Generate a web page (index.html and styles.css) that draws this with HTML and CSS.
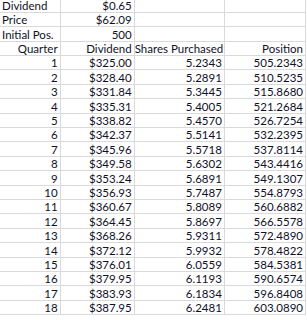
FILE: index.html
```
<!DOCTYPE html>
<html lang="en">
  <head>
    <meta charset="UTF-8" />
    <title>Dividend Reinvestment</title>
    <link rel="stylesheet" href="styles.css">
  </head>
  <body>
    <table class="sheet">
      <colgroup>
        <col class="col-a" />
        <col class="col-b" />
        <col class="col-c" />
        <col class="col-d" />
      </colgroup>
      <tbody>
        <tr><td class="label">Dividend</td><td>$0.65</td><td></td><td></td></tr>
        <tr><td class="label">Price</td><td>$62.09</td><td></td><td></td></tr>
        <tr><td class="label">Initial Pos.</td><td>500</td><td></td><td></td></tr>
        <tr><td>Quarter</td><td>Dividend</td><td>Shares Purchased</td><td>Position</td></tr>
        <tr><td>1</td><td>$325.00</td><td>5.2343</td><td>505.2343</td></tr>
        <tr><td>2</td><td>$328.40</td><td>5.2891</td><td>510.5235</td></tr>
        <tr><td>3</td><td>$331.84</td><td>5.3445</td><td>515.8680</td></tr>
        <tr><td>4</td><td>$335.31</td><td>5.4005</td><td>521.2684</td></tr>
        <tr><td>5</td><td>$338.82</td><td>5.4570</td><td>526.7254</td></tr>
        <tr><td>6</td><td>$342.37</td><td>5.5141</td><td>532.2395</td></tr>
        <tr><td>7</td><td>$345.96</td><td>5.5718</td><td>537.8114</td></tr>
        <tr><td>8</td><td>$349.58</td><td>5.6302</td><td>543.4416</td></tr>
        <tr><td>9</td><td>$353.24</td><td>5.6891</td><td>549.1307</td></tr>
        <tr><td>10</td><td>$356.93</td><td>5.7487</td><td>554.8793</td></tr>
        <tr><td>11</td><td>$360.67</td><td>5.8089</td><td>560.6882</td></tr>
        <tr><td>12</td><td>$364.45</td><td>5.8697</td><td>566.5578</td></tr>
        <tr><td>13</td><td>$368.26</td><td>5.9311</td><td>572.4890</td></tr>
        <tr><td>14</td><td>$372.12</td><td>5.9932</td><td>578.4822</td></tr>
        <tr><td>15</td><td>$376.01</td><td>6.0559</td><td>584.5381</td></tr>
        <tr><td>16</td><td>$379.95</td><td>6.1193</td><td>590.6574</td></tr>
        <tr><td>17</td><td>$383.93</td><td>6.1834</td><td>596.8408</td></tr>
        <tr><td>18</td><td>$387.95</td><td>6.2481</td><td>603.0890</td></tr>
      </tbody>
    </table>
  </body>
</html>
```

FILE: styles.css
```
body {
  margin: 0;
  background: #fff;
  font-family: Lato, "Liberation Sans", sans-serif;
  font-size: 11.5px;
  color: #101028;
}
.sheet {
  border-collapse: collapse;
  table-layout: fixed;
  width: 306px;
  margin-top: -2px;
}
.col-a {
  width: 60px;
}
.col-b {
  width: 74px;
}
.col-c {
  width: 90px;
}
.col-d {
  width: 81px;
}
.sheet tr {
  height: 14.4px;
}
.sheet td {
  border-right: 1px solid #d9d9d9;
  border-bottom: 1px solid #d9d9d9;
  padding: 0 2px 0 0;
  text-align: right;
  vertical-align: bottom;
  line-height: 13px;
  white-space: nowrap;
  overflow: hidden;
}
.sheet td.label {
  text-align: left;
  padding: 0 0 0 2px;
}
```
